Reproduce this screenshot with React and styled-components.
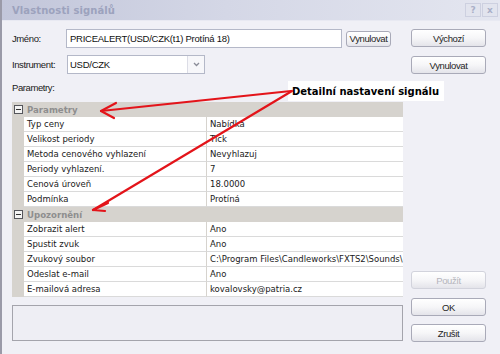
import React from "react";
import styled, { createGlobalStyle } from "styled-components";

const Global = createGlobalStyle`
  html, body { margin: 0; padding: 0; background: #f0f0f6; }
  body { width: 500px; height: 354px; overflow: hidden; }
`;

const SANS = `"Liberation Sans", Arial, sans-serif`;
const VERD = `"DejaVu Sans", Verdana, sans-serif`;

const Window = styled.div`
  position: relative;
  width: 500px;
  height: 354px;
  box-sizing: border-box;
  border-left: 2px solid #9a9aa8;
  background: #f0f0f6;
  display: flex;
  flex-direction: column;
  overflow: hidden;
`;

const TitleBar = styled.div`
  height: 20px;
  flex: none;
  display: flex;
  align-items: center;
  padding-left: 10px;
  padding-right: 2px;
  background: linear-gradient(to right, #c2c6da 0%, #d4d7e6 45%, #e4e6f0 100%);
  border-bottom: 1px solid #e8e9f2;
`;

const Title = styled.div`
  flex: 1;
  font-family: ${VERD};
  font-weight: bold;
  font-size: 10px;
  color: #9ca2bd;
  letter-spacing: 0.1px;
`;

const CapButton = styled.div`
  width: 16px;
  height: 14px;
  box-sizing: border-box;
  border: 1px solid #cdd0e0;
  margin-left: 1px;
  display: flex;
  align-items: center;
  justify-content: center;
  font-family: ${VERD};
  font-size: 9px;
  font-weight: bold;
  color: #aab0c8;
  background: #e2e4ee;
`;

const Body = styled.div`
  flex: 1;
  display: grid;
  grid-template-columns: 391px 75px;
  column-gap: 8px;
  padding: 7px 14px 12px 10px;
`;

const Main = styled.div`
  display: flex;
  flex-direction: column;
`;

const FieldRow = styled.div`
  display: flex;
  align-items: center;
  height: 19px;
  margin-top: ${(p) => p.$mt || 0}px;
`;

const Label = styled.div`
  width: ${(p) => p.$w || 54}px;
  flex: none;
  font-family: ${SANS};
  font-size: 9.5px;
  letter-spacing: -0.4px;
  color: #1a1a1a;
`;

const TextBox = styled.div`
  width: 276px;
  height: 19px;
  box-sizing: border-box;
  border: 1px solid #b4b8c8;
  background: #fff;
  display: flex;
  align-items: center;
  padding-left: 3px;
  font-family: ${SANS};
  font-size: 9.5px;
  letter-spacing: -0.25px;
  color: #111;
  white-space: nowrap;
  overflow: hidden;
`;

const Combo = styled.div`
  width: 138px;
  height: 19px;
  box-sizing: border-box;
  border: 1px solid #b4b8c8;
  background: #fff;
  display: flex;
  align-items: stretch;
  margin-left: 1px;
`;

const ComboText = styled.div`
  flex: 1;
  display: flex;
  align-items: center;
  padding-left: 2px;
  font-family: ${SANS};
  font-size: 9.5px;
  letter-spacing: -0.25px;
  color: #111;
`;

const ComboArrow = styled.div`
  width: 16px;
  border-left: 1px solid #dcdde6;
  background: #f7f7fa;
  display: flex;
  align-items: center;
  justify-content: center;
`;

const Button = styled.div`
  box-sizing: border-box;
  width: ${(p) => p.$w || 75}px;
  height: ${(p) => p.$h || 18}px;
  margin-left: ${(p) => p.$ml || 0}px;
  margin-top: ${(p) => p.$mt || 0}px;
  border: 1px solid ${(p) => (p.$disabled ? "#d2d3dc" : "#a9aab8")};
  border-radius: 3px;
  background: linear-gradient(#ffffff 0%, #f6f6f8 50%, #e4e4ea 100%);
  display: flex;
  align-items: center;
  justify-content: center;
  font-family: ${SANS};
  font-size: 9.5px;
  letter-spacing: -0.4px;
  color: ${(p) => (p.$disabled ? "#b4b4bc" : "#1e1e1e")};
  flex: none;
`;

const SectionLabel = styled.div`
  margin-top: 7px;
  height: 13px;
  line-height: 13px;
  font-family: ${SANS};
  font-size: 9.5px;
  letter-spacing: -0.4px;
  color: #1a1a1a;
`;

const Grid = styled.div`
  margin-top: 8px;
  width: 391px;
  display: flex;
  flex-direction: column;
  font-family: ${VERD};
  font-size: 8.5px;
  color: #1a1a1a;
`;

const Category = styled.div`
  height: 15px;
  display: flex;
  align-items: center;
  background: #d6d3ce;
`;

const Toggle = styled.div`
  width: 9px;
  height: 9px;
  box-sizing: border-box;
  border: 1px solid #55565c;
  background: #f4f4f4;
  margin-left: 2px;
  margin-right: 4px;
  display: flex;
  align-items: center;
  justify-content: center;
  &::after {
    content: "";
    width: 5px;
    height: 1px;
    background: #333;
  }
`;

const CategoryText = styled.div`
  font-weight: bold;
  font-size: 8.6px;
  color: #8e8e8e;
`;

const PropRow = styled.div`
  height: 15px;
  display: grid;
  grid-template-columns: 12px 183px 1fr;
`;

const Gutter = styled.div`
  background: #d6d3ce;
`;

const Cell = styled.div`
  box-sizing: border-box;
  min-width: 0;
  background: #fff;
  border-bottom: 1px solid #dadada;
  border-right: ${(p) => (p.$split ? "1px solid #d6d3ce" : "none")};
  padding-left: 3px;
  display: flex;
  align-items: center;
  white-space: nowrap;
  overflow: hidden;
`;

const DescBox = styled.div`
  margin-top: 8px;
  height: 36px;
  box-sizing: border-box;
  border: 1px solid #a4a4ac;
  background: #eeeef4;
`;

const Side = styled.div`
  display: flex;
  flex-direction: column;
  padding-top: 1px;
`;

const Bottom = styled.div`
  margin-top: auto;
  display: flex;
  flex-direction: column;
`;

const Annotation = styled.div`
  position: absolute;
  left: 286px;
  top: 81px;
  width: 156px;
  height: 20px;
  background: #fff;
  display: flex;
  align-items: center;
  padding-left: 4px;
  box-sizing: border-box;
  font-family: ${VERD};
  font-weight: bold;
  font-size: 10px;
  color: #000;
`;

const Arrows = styled.svg`
  position: absolute;
  left: 0;
  top: 0;
  pointer-events: none;
`;

const groups = [
  {
    name: "Parametry",
    rows: [
      ["Typ ceny", "Nabídka"],
      ["Velikost periody", "Tick"],
      ["Metoda cenového vyhlazení", "Nevyhlazuj"],
      ["Periody vyhlazení.", "7"],
      ["Cenová úroveň", "18.0000"],
      ["Podmínka", "Protíná"],
    ],
  },
  {
    name: "Upozornění",
    rows: [
      ["Zobrazit alert", "Ano"],
      ["Spustit zvuk", "Ano"],
      ["Zvukový soubor", "C:\\Program Files\\Candleworks\\FXTS2\\Sounds\\"],
      ["Odeslat e-mail", "Ano"],
      ["E-mailová adresa", "kovalovsky@patria.cz"],
    ],
  },
];

export default function App() {
  return (
    <>
      <Global />
      <Window>
        <TitleBar>
          <Title>Vlastnosti signálů</Title>
          <CapButton>?</CapButton>
          <CapButton>x</CapButton>
        </TitleBar>
        <Body>
          <Main>
            <FieldRow $mt={1}>
              <Label>Jméno:</Label>
              <TextBox>PRICEALERT(USD/CZK(t1) Protíná 18)</TextBox>
              <Button $w={45} $h={16} $ml={4}>Vynulovat</Button>
            </FieldRow>
            <FieldRow $mt={7}>
              <Label>Instrument:</Label>
              <Combo>
                <ComboText>USD/CZK</ComboText>
                <ComboArrow>
                  <svg width="7" height="5" viewBox="0 0 7 5">
                    <path d="M1 1 L3.5 3.5 L6 1" fill="none" stroke="#8a8c98" strokeWidth="1.3" />
                  </svg>
                </ComboArrow>
              </Combo>
            </FieldRow>
            <SectionLabel>Parametry:</SectionLabel>
            <Grid>
              {groups.map((g) => (
                <React.Fragment key={g.name}>
                  <Category>
                    <Toggle />
                    <CategoryText>{g.name}</CategoryText>
                  </Category>
                  {g.rows.map(([k, v]) => (
                    <PropRow key={k}>
                      <Gutter />
                      <Cell $split>{k}</Cell>
                      <Cell>{v}</Cell>
                    </PropRow>
                  ))}
                </React.Fragment>
              ))}
            </Grid>
            <DescBox />
          </Main>
          <Side>
            <Button>Výchozí</Button>
            <Button $mt={9}>Vynulovat</Button>
            <Bottom>
              <Button $disabled>Použít</Button>
              <Button $mt={9}>OK</Button>
              <Button $mt={8}>Zrušit</Button>
            </Bottom>
          </Side>
        </Body>
        <Annotation>Detailní nastavení signálu</Annotation>
        <Arrows width="500" height="354" viewBox="0 0 500 354">
          <g fill="none" stroke="#e3141a" strokeWidth="2.2" strokeLinecap="round" strokeLinejoin="round">
            <path d="M289 91 L99 111" />
            <path d="M114 103 L99 111 L112 118" />
            <path d="M290 91 L91 210" />
            <path d="M106 203 L91 210 L103 211" />
          </g>
        </Arrows>
      </Window>
    </>
  );
}
